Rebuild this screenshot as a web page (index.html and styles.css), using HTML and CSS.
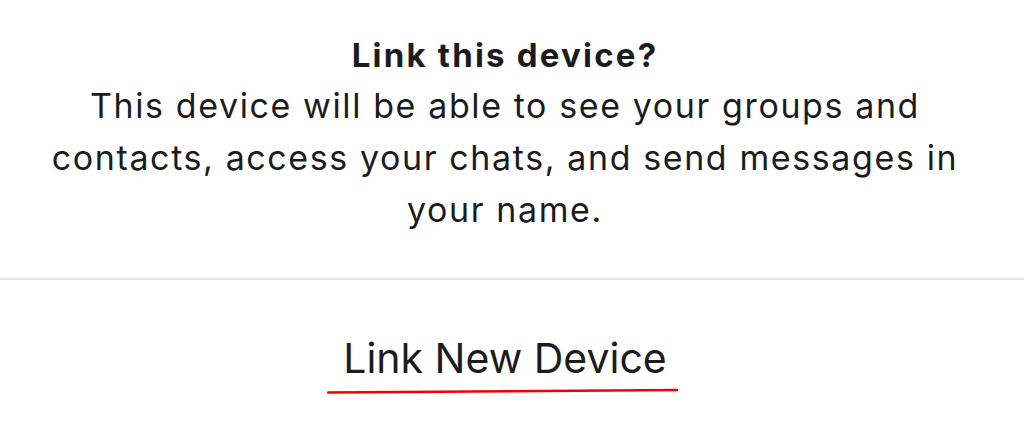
FILE: index.html
```html
<!DOCTYPE html>
<html lang="en">
<head>
    <meta charset="UTF-8">
    <meta name="viewport" content="width=device-width, initial-scale=1.0">
    <title>Link this device?</title>
    <link rel="stylesheet" href="styles.css">
</head>
<body>
    <div class="sheet">
        <div class="prompt">
            <h2 class="prompt-title">Link this device?</h2>
            <p class="prompt-text">This device will be able to see your groups and contacts, access your chats, and send messages in your name.</p>
        </div>
        <div class="separator"></div>
        <div class="action">
            <span class="action-label">Link New Device
                <svg class="marker" width="352" height="8" viewBox="0 0 352 8">
                    <path d="M1 5.5 L350 3" stroke="#f20000" stroke-width="2.4" stroke-linecap="round" fill="none"/>
                </svg>
            </span>
        </div>
    </div>
</body>
</html>
```

FILE: styles.css
```css
body {
    margin: 0;
    background-color: #ffffff;
    color: #1c1c1e;
    font-family: Inter, "Noto Sans", sans-serif;
}
.sheet {
    width: 1024px;
    height: 425px;
    display: flex;
    flex-direction: column;
    align-items: center;
}
.prompt {
    padding-top: 32px;
    padding-right: 14px;
    text-align: center;
    width: 936px;
}
.prompt-title {
    margin: 0;
    font-size: 33px;
    line-height: 46px;
    font-weight: 700;
    letter-spacing: 2.2px;
}
.prompt-text {
    margin: 2px 0 0 0;
    font-size: 34px;
    line-height: 52px;
    font-weight: 400;
    letter-spacing: 1.6px;
}
.separator {
    align-self: stretch;
    height: 2px;
    margin-top: 42px;
    background-color: #e4e4e4;
}
.action {
    margin-top: 48px;
    padding-right: 14px;
    text-align: center;
}
.action-label {
    position: relative;
    display: inline-block;
    font-size: 41px;
    line-height: 60px;
    font-weight: 400;
}
.marker {
    position: absolute;
    left: -16px;
    top: 59px;
}
```
